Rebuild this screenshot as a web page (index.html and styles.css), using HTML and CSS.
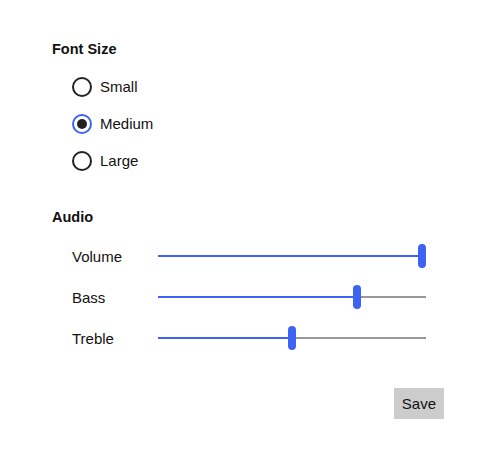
FILE: index.html
```html
<!DOCTYPE html>
<html>
<head>
<meta charset="utf-8">
<link rel="stylesheet" href="styles.css">
</head>
<body>
<div class="panel">
  <section class="group">
    <h2 class="heading">Font Size</h2>
    <div class="radios">
      <label class="radio"><input type="radio" name="fs"><span class="dot"></span><span>Small</span></label>
      <label class="radio"><input type="radio" name="fs" checked><span class="dot"></span><span>Medium</span></label>
      <label class="radio"><input type="radio" name="fs"><span class="dot"></span><span>Large</span></label>
    </div>
  </section>
  <section class="group audio">
    <h2 class="heading">Audio</h2>
    <div class="sliders">
      <div class="slider-row"><span class="slabel">Volume</span><div class="track"><div class="fill" style="width:100%"></div><div class="thumb" style="left:calc(1 * (100% - 8px))"></div></div></div>
      <div class="slider-row"><span class="slabel">Bass</span><div class="track"><div class="fill" style="width:calc(0.75 * (100% - 8px) + 4px)"></div><div class="thumb" style="left:calc(0.75 * (100% - 8px))"></div></div></div>
      <div class="slider-row"><span class="slabel">Treble</span><div class="track"><div class="fill" style="width:calc(0.5 * (100% - 8px) + 4px)"></div><div class="thumb" style="left:calc(0.5 * (100% - 8px))"></div></div></div>
    </div>
  </section>
  <div class="actions"><button class="save">Save</button></div>
</div>
</body>
</html>
```
FILE: styles.css
```css
html, body { margin: 0; padding: 0; background: #fff; }
body { font-family: "Liberation Sans", Arial, sans-serif; color: #111; }
.panel { width: 392px; padding: 40px 0 0 52px; }
.heading { margin: 0; font-size: 14.5px; font-weight: bold; line-height: 18px; }
.radios { display: flex; flex-direction: column; gap: 15px; padding: 18px 0 0 20px; }
.radio { display: flex; align-items: center; gap: 8px; font-size: 15px; line-height: 22px; cursor: pointer; }
.radio input { display: none; }
.dot { width: 16px; height: 16px; border: 2px solid #222; border-radius: 50%; display: flex; align-items: center; justify-content: center; }
.radio input:checked + .dot { border-color: #3d63f5; }
.radio input:checked + .dot::after { content: ""; width: 10px; height: 10px; border-radius: 50%; background: #222; }
.audio { margin-top: 36px; }
.sliders { display: flex; flex-direction: column; gap: 17px; padding: 18px 0 0 20px; }
.slider-row { display: flex; align-items: center; height: 24px; font-size: 15px; }
.slabel { width: 86px; }
.track { position: relative; width: 268px; height: 2px; background: #999; }
.fill { height: 100%; background: #3d63f5; }
.thumb { position: absolute; top: -11px; width: 8px; height: 24px; border-radius: 4px; background: #3d63f5; }
.actions { display: flex; justify-content: flex-end; padding-top: 38px; }
.save { font-family: inherit; font-size: 15px; background: #ccc; border: none; padding: 0 8px; height: 31px; color: #111; }
```
